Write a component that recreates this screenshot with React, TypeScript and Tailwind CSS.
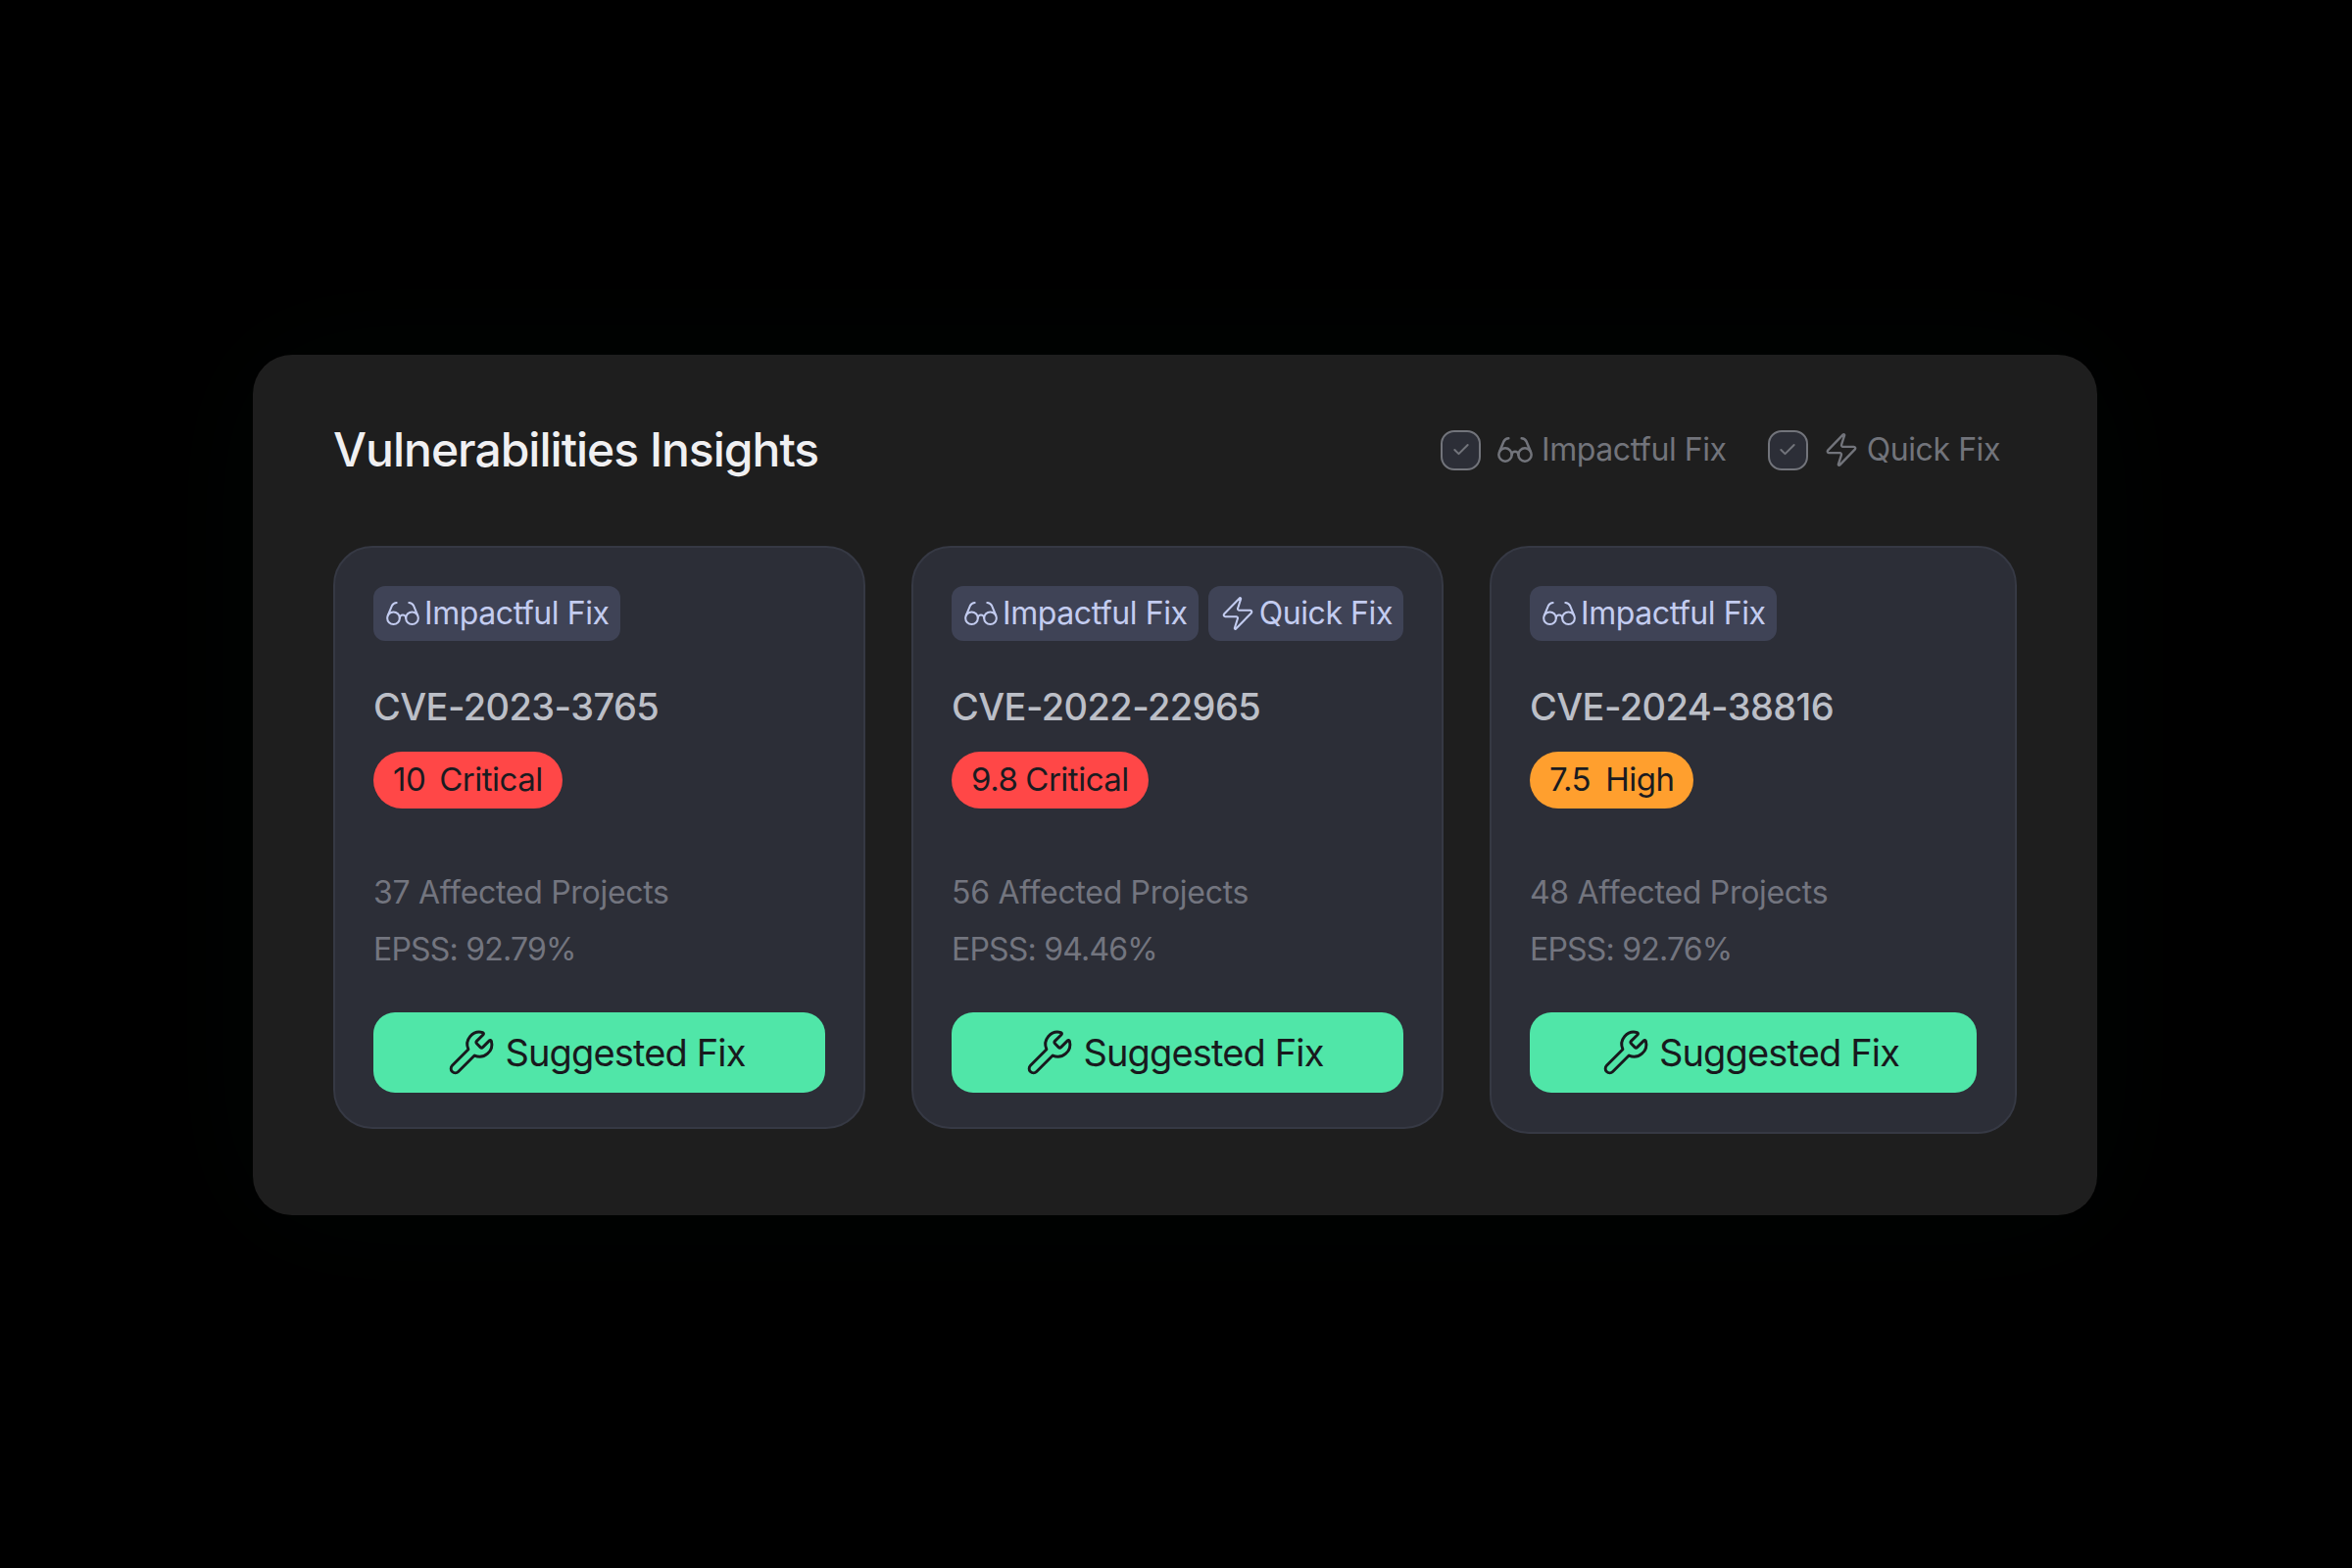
import { Check, Glasses, Wrench, Zap } from "lucide-react";

function Tag({ kind }: { kind: "impact" | "quick" }) {
  return (
    <div className="flex h-[56px] items-center gap-[3px] rounded-[12px] bg-[#3f4356] px-[11px] text-[32px] tracking-[-0.42px] text-[#c3ccf0]">
      {kind === "impact" ? (
        <Glasses size={38} strokeWidth={1.3} />
      ) : (
        <Zap size={38} strokeWidth={1.3} />
      )}
      <span>{kind === "impact" ? "Impactful Fix" : "Quick Fix"}</span>
    </div>
  );
}

function Filter({ kind }: { kind: "impact" | "quick" }) {
  return (
    <div className="flex items-center text-[32px] tracking-[-0.42px] text-[#72747b]">
      <div className="flex h-[41px] w-[41px] items-center justify-center rounded-[14px] border-2 border-[#72747b] bg-[#2c2e37]">
        <Check size={20} strokeWidth={2.4} />
      </div>
      <div className="ml-[15px] flex items-center gap-[7px]">
        {kind === "impact" ? (
          <Glasses size={40} strokeWidth={1.5} />
        ) : (
          <Zap size={38} strokeWidth={1.5} />
        )}
        <span>{kind === "impact" ? "Impactful Fix" : "Quick Fix"}</span>
      </div>
    </div>
  );
}

type CardData = {
  tags: ("impact" | "quick")[];
  cve: string;
  num: string;
  label: string;
  gap: string;
  color: string;
  projects: string;
  epss: string;
  size: string;
};

const cards: CardData[] = [
  { tags: ["impact"], cve: "CVE-2023-3765", num: "10", label: "Critical", gap: "gap-[14px]", color: "bg-[#ff4747]", projects: "37 Affected Projects", epss: "EPSS: 92.79%", size: "h-[595px] w-[543px]" },
  { tags: ["impact", "quick"], cve: "CVE-2022-22965", num: "9.8", label: "Critical", gap: "gap-[8px]", color: "bg-[#ff4747]", projects: "56 Affected Projects", epss: "EPSS: 94.46%", size: "h-[595px] w-[543px]" },
  { tags: ["impact"], cve: "CVE-2024-38816", num: "7.5", label: "High", gap: "gap-[15px]", color: "bg-[#ff9f2e]", projects: "48 Affected Projects", epss: "EPSS: 92.76%", size: "h-[600px] w-[538px]" },
];

function Card({ c }: { c: CardData }) {
  return (
    <div className={`${c.size} flex flex-col rounded-[40px] border-2 border-[#363944] bg-[#2c2e37] px-[39px] pt-[39px]`}>
      <div className="flex gap-[10px]">
        {c.tags.map((t) => (
          <Tag key={t} kind={t} />
        ))}
      </div>
      <div className="mt-[42px] h-[50px] text-[38px] font-[450] leading-[50px] tracking-[-0.6px] text-[#bcbfc7]">{c.cve}</div>
      <div className="mt-[21px] flex">
        <div className={`${c.color} ${c.gap} flex h-[58px] items-center rounded-full px-[20px] text-[33px] tracking-[-0.5px] text-[#1a1b20]`}>
          <span>{c.num}</span>
          <span>{c.label}</span>
        </div>
      </div>
      <div className="mt-[57px] h-[58px] text-[32px] leading-[58px] tracking-[-0.3px] text-[#73757f]">{c.projects}</div>
      <div className="h-[58px] text-[32px] leading-[58px] tracking-[-0.8px] text-[#73757f]">{c.epss}</div>
      <div className="mt-[35px] flex h-[82px] items-center justify-center gap-[9px] rounded-[22px] bg-[#50e6a8] pr-[6px] text-[38px] tracking-[-0.85px] text-[#18191d]">
        <Wrench size={50} strokeWidth={1.4} />
        <span>Suggested Fix</span>
      </div>
    </div>
  );
}

export default function App() {
  return (
    <div className="flex h-[1600px] w-[2400px] items-start justify-start bg-black pl-[258px] pt-[362px] font-['Inter',sans-serif]">
      <div className="h-[878px] w-[1882px] rounded-[40px] bg-[#1e1e1e] pl-[82px] pr-[82px] pt-[67px] shadow-[0_0_140px_rgba(0,60,40,0.1)]">
        <div className="flex h-[60px] items-center justify-between">
          <h1 className="text-[48px] font-medium tracking-[-1px] text-[#f0f0f2]">Vulnerabilities Insights</h1>
          <div className="mr-[17px] flex gap-[42px]">
            <Filter kind="impact" />
            <Filter kind="quick" />
          </div>
        </div>
        <div className="mt-[68px] flex items-start gap-[47px]">
          {cards.map((c) => (
            <Card key={c.cve} c={c} />
          ))}
        </div>
      </div>
    </div>
  );
}
